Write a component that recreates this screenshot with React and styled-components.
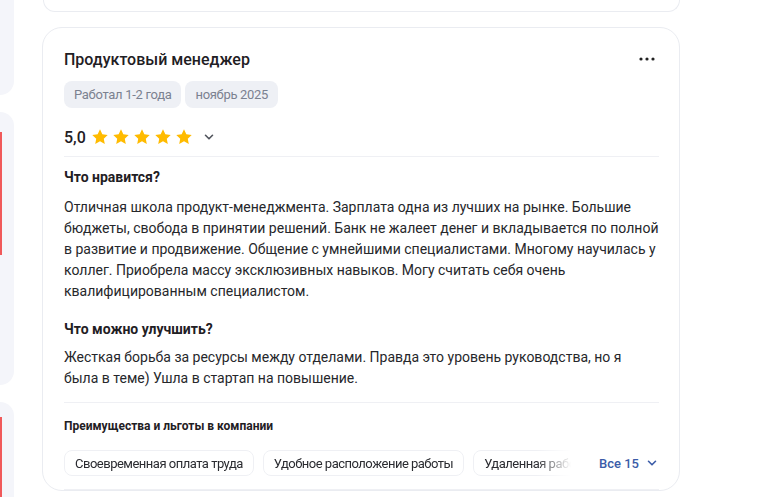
import React from "react";
import styled, { createGlobalStyle } from "styled-components";

const colors = {
  text: "#1f2024",
  muted: "#7b8190",
  border: "#eaecf1",
  divider: "#eff0f4",
  tagBg: "#eef0f5",
  rail: "#f4f5fa",
  star: "#ffbb00",
  link: "#3b5ca8",
  red: "#f0595a"
};

const GlobalStyle = createGlobalStyle`
  html, body {
    margin: 0;
    padding: 0;
    background: #ffffff;
    overflow: hidden;
  }
  body {
    font-family: Roboto, "Noto Sans", Arial, sans-serif;
    color: ${colors.text};
    -webkit-font-smoothing: antialiased;
  }
`;

const Page = styled.div`
  display: flex;
  gap: 28px;
  height: 497px;
  overflow: hidden;
`;

const Rail = styled.div`
  width: 14px;
  display: flex;
  flex-direction: column;
  gap: 17px;
  flex-shrink: 0;
`;

const RailPanel = styled.div`
  position: relative;
  height: ${p => p.$h}px;
  background: ${colors.rail};
  border-radius: ${p => (p.$flatTop ? "0 0 14px 0" : "0 14px 14px 0")};
  flex-shrink: 0;
  overflow: hidden;

  &::before {
    content: "";
    display: ${p => (p.$accent ? "block" : "none")};
    position: absolute;
    left: 0;
    top: ${p => p.$accentTop}px;
    width: 2px;
    height: ${p => p.$accentH}px;
    background: ${colors.red};
  }
`;

const Feed = styled.div`
  width: 638px;
  display: flex;
  flex-direction: column;
  gap: 15px;
`;

const PrevCard = styled.div`
  height: 11px;
  margin-left: 1px;
  border: 1px solid ${colors.border};
  border-top: none;
  border-radius: 0 0 16px 16px;
`;

const Card = styled.article`
  border: 1px solid ${colors.border};
  border-radius: 20px;
  padding: 20px 20px 0 21px;
  flex-shrink: 0;
`;

const Header = styled.div`
  display: flex;
  align-items: center;
  justify-content: space-between;
`;

const Title = styled.h2`
  margin: 0;
  font-size: 16px;
  line-height: 24px;
  font-weight: 500;
`;

const MoreButton = styled.button`
  border: none;
  background: none;
  padding: 0;
  width: 20px;
  height: 20px;
  display: flex;
  align-items: center;
  justify-content: center;
  margin: -3px 2px 0 0;
  cursor: pointer;
`;

const Tags = styled.div`
  display: flex;
  gap: 4px;
  margin-top: 9px;
`;

const Tag = styled.span`
  height: 27px;
  padding: 0 10px;
  display: inline-flex;
  align-items: center;
  border-radius: 8px;
  background: ${colors.tagBg};
  color: ${colors.muted};
  font-size: 13px;
  letter-spacing: -0.3px;
`;

const RatingRow = styled.div`
  display: flex;
  align-items: center;
  height: 28px;
  margin-top: 15px;
  padding-bottom: 5px;
  border-bottom: 1px solid ${colors.divider};
`;

const Score = styled.span`
  font-size: 16px;
  font-weight: 500;
  margin-right: 6px;
`;

const Stars = styled.div`
  display: flex;
  gap: 5px;
`;

const Toggle = styled.span`
  display: inline-flex;
  margin-left: 11px;
  color: #50545c;
`;

const Section = styled.section`
  padding-top: ${p => p.$top}px;
`;

const SectionTitle = styled.h3`
  margin: 0 0 ${p => p.$gap || 9}px;
  font-size: 14px;
  line-height: 20px;
  font-weight: 700;
`;

const Text = styled.p`
  margin: 0;
  font-size: 14px;
  line-height: 21px;
  color: #26272b;
`;

const BenefitsBlock = styled.div`
  margin-top: 13px;
  padding-top: 15px;
  border-top: 1px solid ${colors.divider};
`;

const BenefitsTitle = styled.h4`
  margin: 0;
  font-size: 12px;
  line-height: 16px;
  font-weight: 700;
`;

const BenefitsRow = styled.div`
  display: flex;
  align-items: center;
  margin-top: 16px;
  padding-bottom: 13px;
  border-bottom: 1px solid ${colors.divider};
`;

const ChipScroller = styled.div`
  display: flex;
  gap: 9px;
  width: 507px;
  overflow: hidden;
  flex-shrink: 0;
  -webkit-mask-image: linear-gradient(to right, #000 472px, transparent 507px);
  mask-image: linear-gradient(to right, #000 472px, transparent 507px);
`;

const Chip = styled.span`
  height: 26px;
  padding: 0 10px;
  display: inline-flex;
  align-items: center;
  white-space: nowrap;
  border: 1px solid ${colors.divider};
  border-radius: 8px;
  font-size: 13px;
  letter-spacing: -0.5px;
  color: #2a2b30;
  box-sizing: border-box;
  flex-shrink: 0;
`;

const ShowAll = styled.button`
  margin-left: 28px;
  border: none;
  background: none;
  padding: 0;
  display: inline-flex;
  align-items: center;
  gap: 7px;
  white-space: nowrap;
  flex-shrink: 0;
  font-family: inherit;
  font-size: 13px;
  font-weight: 500;
  color: ${colors.link};
  cursor: pointer;
`;

const Star = () => (
  <svg width="16" height="16" viewBox="1.2 1.2 21.6 21.6">
    <path
      fill={colors.star}
      d="M12 1.6l3.15 6.6 7.25.95-5.3 5.05 1.35 7.2L12 17.9l-6.45 3.5 1.35-7.2-5.3-5.05 7.25-.95z"
    />
  </svg>
);

const Chevron = ({ color = "currentColor", size = 12 }) => (
  <svg width={size} height={size} viewBox="0 0 12 12" fill="none">
    <path d="M2.5 4.3L6 7.8l3.5-3.5" stroke={color} strokeWidth="1.6" strokeLinecap="round" strokeLinejoin="round" />
  </svg>
);

const Dots = () => (
  <svg width="16" height="4" viewBox="0 0 16 4">
    <circle cx="2" cy="2" r="1.6" fill="#222" />
    <circle cx="8" cy="2" r="1.6" fill="#222" />
    <circle cx="14" cy="2" r="1.6" fill="#222" />
  </svg>
);

const benefits = [
  "Своевременная оплата труда",
  "Удобное расположение работы",
  "Удаленная работа",
  "ДМС"
];

const App = () => (
  <>
    <GlobalStyle />
    <Page>
      <Rail>
        <RailPanel $h={95} $flatTop />
        <RailPanel $h={273} $accent $accentTop={20} $accentH={123} />
        <RailPanel $h={120} $accent $accentTop={15} $accentH={120} />
      </Rail>
      <Feed>
        <PrevCard />
        <Card>
          <Header>
            <Title>Продуктовый менеджер</Title>
            <MoreButton aria-label="Ещё">
              <Dots />
            </MoreButton>
          </Header>
          <Tags>
            <Tag>Работал 1-2 года</Tag>
            <Tag>ноябрь 2025</Tag>
          </Tags>
          <RatingRow>
            <Score>5,0</Score>
            <Stars>
              {[0, 1, 2, 3, 4].map(i => (
                <Star key={i} />
              ))}
            </Stars>
            <Toggle>
              <Chevron />
            </Toggle>
          </RatingRow>
          <Section $top={10}>
            <SectionTitle $gap={10}>Что нравится?</SectionTitle>
            <Text>
              Отличная школа продукт-менеджмента. Зарплата одна из лучших на рынке. Большие
              бюджеты, свобода в принятии решений. Банк не жалеет денег и вкладывается по полной
              в развитие и продвижение. Общение с умнейшими специалистами. Многому научилась у
              коллег. Приобрела массу эксклюзивных навыков. Могу считать себя очень
              квалифицированным специалистом.
            </Text>
          </Section>
          <Section $top={17}>
            <SectionTitle $gap={8}>Что можно улучшить?</SectionTitle>
            <Text>
              Жесткая борьба за ресурсы между отделами. Правда это уровень руководства, но я
              была в теме) Ушла в стартап на повышение.
            </Text>
          </Section>
          <BenefitsBlock>
            <BenefitsTitle>Преимущества и льготы в компании</BenefitsTitle>
            <BenefitsRow>
              <ChipScroller>
                {benefits.map(b => (
                  <Chip key={b}>{b}</Chip>
                ))}
              </ChipScroller>
              <ShowAll>
                Все 15
                <Chevron />
              </ShowAll>
            </BenefitsRow>
          </BenefitsBlock>
        </Card>
      </Feed>
    </Page>
  </>
);

export default App;
